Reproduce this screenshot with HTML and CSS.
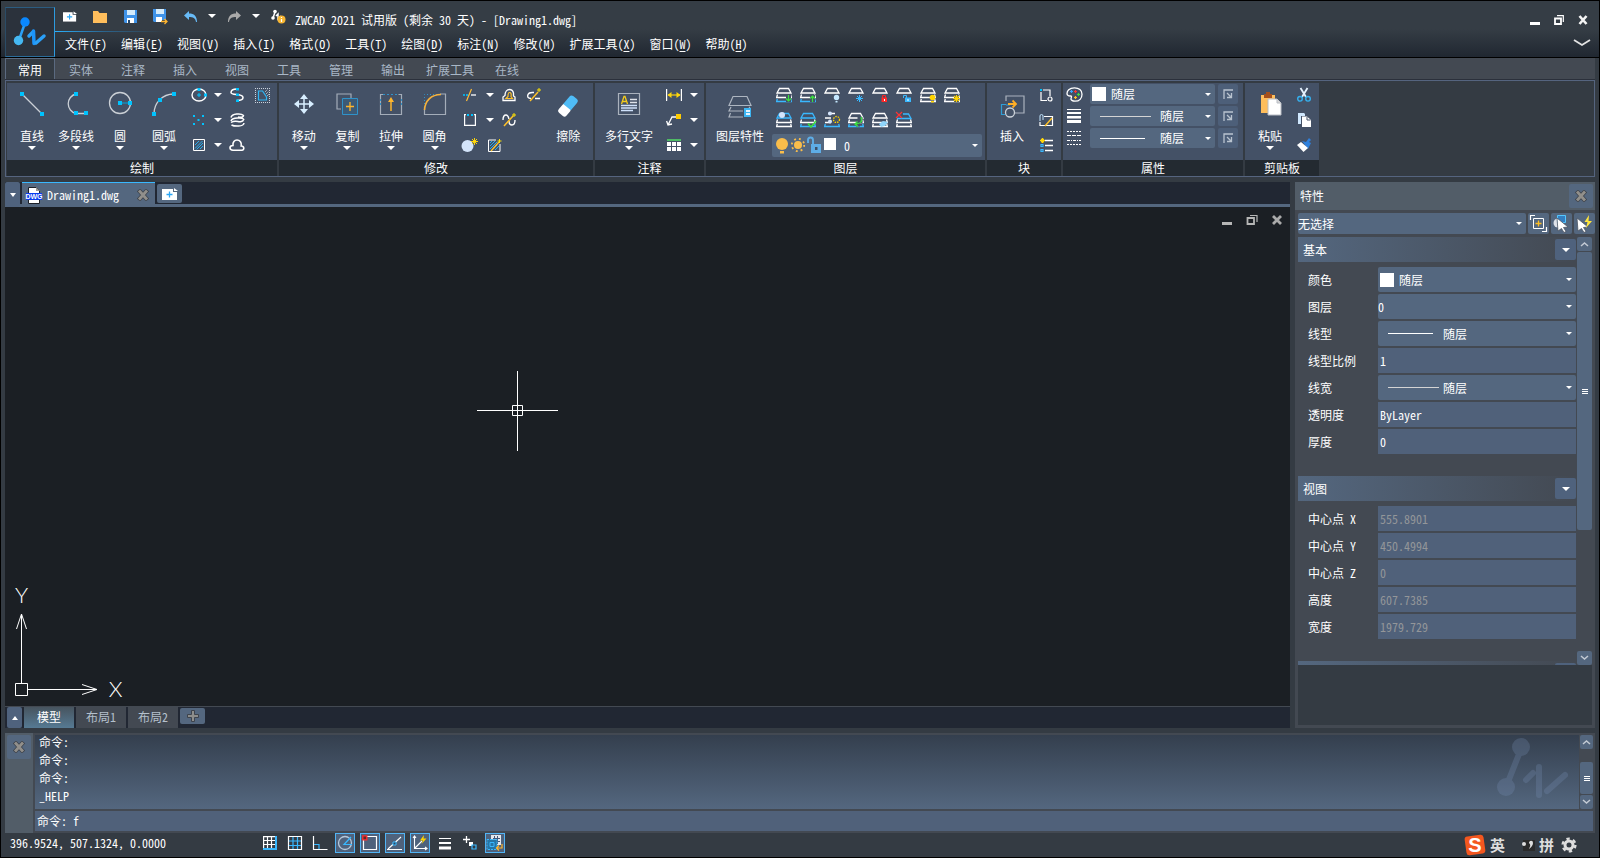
FILE: index.html
```html
<!DOCTYPE html>
<html lang="zh-CN">
<head>
<meta charset="utf-8">
<title>ZWCAD 2021 试用版 - [Drawing1.dwg]</title>
<link rel="stylesheet" href="styles.css">
</head>
<body>
<svg class="sprite" aria-hidden="true">
  <defs>
    <symbol id="trap" viewBox="0 0 16 16"><path d="M3.500 1.500h9l2.500 4.500H1z" fill="none" stroke="currentColor" stroke-width="1.300"/></symbol>
    <symbol id="mid" viewBox="0 0 16 16"><path d="M1.500 7.500L.6 10.500h14.800L14.500 7.500" fill="none" stroke="currentColor" stroke-width="1.300"/></symbol>
    <symbol id="bot" viewBox="0 0 16 16"><path d="M1.300 12L.6 14.500h14.800L14.700 12" fill="none" stroke="currentColor" stroke-width="1.300"/></symbol>
    <symbol id="up" viewBox="0 0 9 6"><path d="M1 5l3.500-3L8 5" fill="none" stroke="#c3cad4" stroke-width="1.500"/></symbol>
    <symbol id="down" viewBox="0 0 9 6"><path d="M1 1l3.500 3L8 1" fill="none" stroke="#c3cad4" stroke-width="1.500"/></symbol>
    <symbol id="cross" viewBox="0 0 12 12"><path d="M1.500 1l9 10M10.500 1l-9 10" stroke="#3d424a" stroke-width="4.400"/><path d="M2 1.500l8 9M10 1.500l-8 9" stroke="#918f8b" stroke-width="2.800"/></symbol>
    <symbol id="launch" viewBox="0 0 10 10"><path d="M1 10V1h9M4 4l4 4M8.500 4v4.500H4" fill="none" stroke="#b9c3cf" stroke-width="1.300"/></symbol>
    <symbol id="newfile" viewBox="0 0 16 12"><path d="M0 1h11v3h4v8H0z" fill="#fff"/><path d="M12 0l4 3h-4z" fill="#fff"/><path d="M7.500 3.500v6M4.500 6.500h6" stroke="#2ba6f5" stroke-width="1.300"/></symbol>
  </defs>
</svg>

<div class="app">
  <header class="top">
    <button class="logo" aria-label="ZWCAD">
      <svg width="50" height="50" viewBox="0 0 50 50"><g stroke-linecap="round" fill="none"><path d="M20 16l-6 17" stroke-width="2.500" stroke="#2aa0f8"/><path d="M24 29l4-4" stroke-width="3.500" stroke="#2aa0f8"/><path d="M28.500 24l.5 12.500" stroke-width="3.500" stroke="#1c94fa"/><path d="M31 36l8-7" stroke-width="3.500" stroke="#2aa0f8"/></g><circle cx="20" cy="15" r="4.700" fill="#0a88ff"/><circle cx="13.500" cy="33.500" r="4.700" fill="#45b8f2"/></svg>
    </button>
    <div class="top-main">
      <div class="quick">
        <button class="q" aria-label="新建"><svg width="14" height="11" viewBox="0 0 16 12"><use href="#newfile"/></svg></button>
        <button class="q" aria-label="打开"><svg width="14" height="13"><path d="M0 1h5l1.500 2H14v10H0z" fill="#ffbe5c"/></svg></button>
        <button class="q" aria-label="保存"><svg width="13" height="13"><path d="M0 0h13v13H1L0 12z" fill="#3f93e8"/><path d="M3 0h8v5H3z" fill="#d4ebfb"/><path d="M3 8h7v5H3z" fill="#fff"/><path d="M4 10h2v3H4z" fill="#25496d"/></svg></button>
        <button class="q" aria-label="另存为"><svg width="15" height="15"><path d="M0 0h13v11H9v2H1L0 12z" fill="#3f93e8"/><path d="M3 0h8v5H3z" fill="#d4ebfb"/><path d="M3 8h6v5H3z" fill="#fff"/><path d="M8 12.500h6M11.500 10l2.500 2.500-2.500 2.500" stroke="#ffb52e" stroke-width="1.300" fill="none"/></svg></button>
        <button class="q" aria-label="撤销"><svg width="13" height="11"><path d="M5 0v2.500c5 0 8 2.500 8 8.500h-1c-.5-4-3-5-7-5v3L0 4.500z" fill="#68bbf7"/></svg></button>
        <button class="qa" aria-label="撤销列表"><i class="tri"></i></button>
        <button class="q" aria-label="重做"><svg width="13" height="11"><path d="M8 0v2.500C3 2.500 0 5 0 11h1c.5-4 3-5 7-5v3l5-4.500z" fill="#a9a9a9"/></svg></button>
        <button class="qa" aria-label="重做列表"><i class="tri"></i></button>
        <span class="q"><svg width="15" height="15"><circle cx="4" cy="2.500" r="1.800" fill="#fff"/><circle cx="2" cy="9" r="1.800" fill="#fff"/><path d="M4 3L2 9M5 7l2-2v5l3-3" stroke="#fff" stroke-width="1.500" fill="none"/><circle cx="10.500" cy="10.500" r="4" fill="#f8b733"/><path d="M10.500 8v1M10.500 10v3" stroke="#fff" stroke-width="1.200"/></svg></span>
        <span class="title">ZWCAD 2021 试用版 (剩余 30 天) - [Drawing1.dwg]</span>
      </div>
      <nav class="menu">
        <button>文件(<u>F</u>)</button><button>编辑(<u>E</u>)</button><button>视图(<u>V</u>)</button><button>插入(<u>I</u>)</button><button>格式(<u>O</u>)</button><button>工具(<u>T</u>)</button><button>绘图(<u>D</u>)</button><button>标注(<u>N</u>)</button><button>修改(<u>M</u>)</button><button>扩展工具(<u>X</u>)</button><button>窗口(<u>W</u>)</button><button>帮助(<u>H</u>)</button>
      </nav>
    </div>
    <div class="win">
      <div class="win-row">
        <button aria-label="最小化"><svg width="10" height="10"><path d="M0 7h10v3H0z" fill="#fff"/></svg></button>
        <button aria-label="还原"><svg width="10" height="10"><path d="M1 3.500h6v5.500H1z" fill="none" stroke="#fff" stroke-width="1.800"/><path d="M3 .7h6.300V7" fill="none" stroke="#fff" stroke-width="1.200"/></svg></button>
        <button aria-label="关闭"><svg width="10" height="10"><path d="M1.500 1l7 8M8.500 1l-7 8" stroke="#f4f4f4" stroke-width="2.600"/></svg></button>
      </div>
      <button class="fold" aria-label="折叠功能区"><svg width="16" height="8"><path d="M0 1l8 5 8-5" fill="none" stroke="#e3e3e3" stroke-width="1.800"/></svg></button>
    </div>
  </header>

  <nav class="tabs">
    <button class="on">常用</button><button>实体</button><button>注释</button><button>插入</button><button>视图</button><button>工具</button><button>管理</button><button>输出</button><button>扩展工具</button><button>在线</button>
  </nav>

  <section class="ribbon">
    <div class="panel p-draw">
      <div class="tools">
        <button class="big"><svg width="28" height="28"><path d="M4 3l21 21" stroke="#cbd0d6" stroke-width="1.300"/><path d="M2 1h4v4H2zM22 21h4v4h-4z" fill="#00c3ff"/></svg>直线<i class="tri"></i></button>
        <button class="big"><svg width="28" height="28"><path d="M14 3a10 10 0 0 0 0 19.500h10" fill="none" stroke="#cbd0d6" stroke-width="1.300"/><path d="M12 1h4v4h-4zM12 20h4v4h-4zM22 20h4v4h-4z" fill="#00c3ff"/></svg>多段线<i class="tri"></i></button>
        <button class="big"><svg width="28" height="28"><circle cx="14" cy="12" r="10.500" fill="none" stroke="#cbd0d6" stroke-width="1.300"/><path d="M14 12h10" stroke="#00a6dd"/><path d="M12 10h4v4h-4zM22 10h4v4h-4z" fill="#00c3ff"/></svg>圆<i class="tri"></i></button>
        <button class="big"><svg width="28" height="28"><path d="M4 23C4 12 12 3 24 3" fill="none" stroke="#cbd0d6" stroke-width="1.300"/><path d="M2 21h4v4H2zM8 7h4v4H8zM22 1h4v4h-4z" fill="#00c3ff"/></svg>圆弧<i class="tri"></i></button>
        <div class="minis">
          <div class="mrow">
            <button class="m26" aria-label="椭圆"><svg width="16" height="14"><ellipse cx="8" cy="7" rx="7" ry="6" fill="none" stroke="#fff" stroke-width="1.400"/><path d="M6.500 0h3v3h-3zM13 5.500h3v3h-3z" fill="#00c3ff"/><path d="M8 5v4M6 7h4" stroke="#00c3ff"/></svg></button><button class="m12" aria-label="椭圆选项"><i class="tri"></i></button>
            <button class="m26" aria-label="样条曲线"><svg width="14" height="14"><path d="M7 1C2 1 1 3 1 4.500 1 8 13 5 13 9.500c0 3-4 3-6 3" fill="none" stroke="#fff" stroke-width="1.500"/><path d="M6 0h3v2.500H6zM6 5.500h3V8H6zM6 11.500h3V14H6z" fill="#00c3ff"/></svg></button>
            <button class="m24" aria-label="边界"><svg width="15" height="15"><path d="M0 .500h15M0 14.500h15M.500 2v12M14.500 2v12" fill="none" stroke="#cbd4df" stroke-dasharray="1 1"/><path d="M10 4l3-3M11 6l3-3M12 8l2-2" stroke="#cbd4df" stroke-dasharray="1 1"/><path d="M3.500 12V3h4l4 6v3z" fill="none" stroke="#2fb6f4" stroke-width="1.200"/></svg></button>
          </div>
          <div class="mrow">
            <button class="m26" aria-label="点"><svg width="12" height="12"><path d="M0 1h2v2H0zM9 1h2v2H9zM4.500 5h2v2h-2zM0 9h2v2H0zM9 9h2v2H9z" fill="#00c3ff"/></svg></button><button class="m12" aria-label="点选项"><i class="tri"></i></button>
            <button class="m26" aria-label="螺旋"><svg width="15" height="14"><path d="M1 4.500C2 .500 11 0 13.500 2.500c0 2-3 2-5.500 1.500M1 8c1-3.500 12-4 13-1M1 9.500c3-2 5-1.500 7-1s5 0 5.500-1.500M1.500 12c3 1.500 12 2 12.500-2" fill="none" stroke="#fff" stroke-width="1.500"/></svg></button>
          </div>
          <div class="mrow">
            <button class="m26" aria-label="图案填充"><svg width="12" height="12"><path d="M.5.500h11v11H.500z" fill="none" stroke="#fff" stroke-width="1"/><path d="M2 6l4-4M2 9.500L9.500 2M3.500 10.500L10 4M7 10l3-3" stroke="#25aef0"/></svg></button><button class="m12" aria-label="填充选项"><i class="tri"></i></button>
            <button class="m26" aria-label="修订云线"><svg width="16" height="12"><path d="M4 11.200h9c2.500 0 2.500-4.200-.8-4.200C13 3 10.500 1 8 1S3.500 3 4 6.500C0 6.500 0 11.200 4 11.200z" fill="none" stroke="#fff" stroke-width="1.600"/></svg></button>
          </div>
        </div>
      </div>
      <h2>绘制</h2>
    </div>

    <div class="panel p-mod">
      <div class="tools">
        <button class="big"><svg width="28" height="28"><path d="M14 5v16M6 13h16" stroke="#d8eeff" stroke-width="1.500"/><path d="M14 3l4 5h-8zM14 23l4-5h-8zM4 13l5-4v8zM24 13l-5-4v8z" fill="#d8eeff"/></svg>移动<i class="tri"></i></button>
        <button class="big"><svg width="28" height="28"><path d="M8 18H4V3h14v4" fill="none" stroke="#a4adb9" stroke-width="1.200"/><path d="M9.500 7.500h15v16h-15z" fill="#3c5a76" stroke="#2f92c9"/><path d="M17 11v9M13 15.500h8" stroke="#ffb62c" stroke-width="1.300"/></svg>复制<i class="tri"></i></button>
        <button class="big"><svg width="28" height="28"><path d="M6.500 3.500h-3v20h21v-20h-3" fill="none" stroke="#a4adb9" stroke-width="1.200"/><path d="M6 3.500h16M3.500 8v6M24.500 8v6" stroke="#2f92c9" stroke-dasharray="2 2"/><path d="M14 20V9" stroke="#ffb62c" stroke-width="1.500"/><path d="M14 6l3 5h-6z" fill="#ffb62c"/></svg>拉伸<i class="tri"></i></button>
        <button class="big"><svg width="28" height="28"><path d="M3.500 16v7.500h21V3H19" fill="none" stroke="#a4adb9" stroke-width="1.200"/><path d="M3.500 16V3.500H18" fill="none" stroke="#2f92c9" stroke-dasharray="1 2"/><path d="M3.500 19C4 10 10 3.500 20 3.500" fill="none" stroke="#f7b23b" stroke-width="1.600"/></svg>圆角<i class="tri"></i></button>
        <div class="minis">
          <div class="mrow">
            <button class="m28" aria-label="修剪"><svg width="14" height="14"><path d="M0 7h5" stroke="#00c3ff" stroke-width="1.300" stroke-dasharray="2 1"/><path d="M8 7h5" stroke="#fff" stroke-width="1.300"/><path d="M3.500 13L8.500 1" stroke="#ffbd39" stroke-width="1.200"/></svg></button><button class="m12" aria-label="修剪选项"><i class="tri"></i></button>
            <button class="m26" aria-label="偏移"><svg width="14" height="14"><path d="M1 12.500V9l2-1.500C3 4 5 1.500 7.500 1.500S11 3 11.500 5v3l1.500 1v3.500z" fill="none" stroke="#fff" stroke-width="1.300"/><path d="M4 10.500l2-2C6 6 6 4.500 7.500 4.500S9.500 6 9 8.500l1.500 2z" fill="none" stroke="#ffc229" stroke-width="1.200"/></svg></button>
            <button class="m24" aria-label="编辑多段线"><svg width="14" height="14"><path d="M4 10.500C1 10.500 0 9 1 6.500 2 4 4 4.500 7 4.500M8 10.500h5" fill="none" stroke="#fff" stroke-width="1.400"/><path d="M3 13l8-9" stroke="#ffc229" stroke-width="1.500"/><path d="M12 0v4M10 2h4" stroke="#ffe400"/></svg></button>
          </div>
          <div class="mrow">
            <button class="m28" aria-label="打断"><svg width="12" height="12"><path d="M2 .600H.600v10.800h10.800V.600H10" fill="none" stroke="#fff" stroke-width="1.200"/><path d="M3 0h2v2H3zM7 0h2v2H7z" fill="#00c3ff"/></svg></button><button class="m12" aria-label="打断选项"><i class="tri"></i></button>
            <button class="m26" aria-label="编辑样条"><svg width="14" height="14"><path d="M1 7C1 4 2 2 4 2s2.500 2 3 4M7 8c0 3 1 4 3 4s3-2 3-5" fill="none" stroke="#fff" stroke-width="1.400"/><path d="M2 13l9-10" stroke="#ffc229" stroke-width="1.500"/><path d="M12 0v4M10 2h4" stroke="#ffe400"/></svg></button>
          </div>
          <div class="mrow">
            <button class="m26" aria-label="分解"><svg width="17" height="14"><circle cx="6.500" cy="8" r="6" fill="#d3e4fb"/><path d="M13.500 0v7M10 3.500h7M11 1l5 5M16 1l-5 5" stroke="#ffd60a"/></svg></button>
            <button class="m24" aria-label="编辑填充"><svg width="13" height="13"><path d="M12 5v7.500H.500V1H8" fill="none" stroke="#fff"/><path d="M2 4l2-2M2 7l5-5M2 10l7-7M4 11l5-5M7 11l4-4" stroke="#25aef0"/><path d="M3 12l8-9" stroke="#ffc229" stroke-width="1.300"/><path d="M11.500 0v4M9.500 2h4" stroke="#ffe400"/></svg></button>
          </div>
        </div>
        <button class="big"><svg width="28" height="28"><g transform="rotate(-50 14 15)"><rect x="3" y="10" width="11" height="10" rx="2.500" fill="#fff"/><path d="M12.500 10H22q3 0 3 3v4q0 3-3 3h-9.500z" fill="#4fbcf7"/></g></svg>擦除</button>
      </div>
      <h2>修改</h2>
    </div>

    <div class="panel p-note">
      <div class="tools">
        <button class="big w62"><svg width="28" height="28"><path d="M3.500 2.500h21v21h-21z" fill="none" stroke="#aab2bd" stroke-width="1.200"/><path d="M6.500 13L9 5.500h1l2.500 7.500M7.500 10.500h4" fill="none" stroke="#f3cb1c" stroke-width="1.300"/><path d="M15 8.500h7M15 11.500h7" stroke="#dfe3ea" stroke-width="1.300"/><path d="M6 14.500h16M6 17h16M6 19.500h12" stroke="#cfe1fb" stroke-width="1.300"/></svg>多行文字<i class="tri"></i></button>
        <div class="minis">
          <div class="mrow"><button class="m28" aria-label="标注"><svg width="16" height="12"><path d="M.600 0v12M15.400 0v12" stroke="#fff" stroke-width="1.200"/><path d="M2 6h12" stroke="#ffd60a" stroke-width="1.200"/><path d="M1.500 6l4-3v6zM14.500 6l-4-3v6z" fill="#ffd60a"/></svg></button><button class="m12" aria-label="标注选项"><i class="tri"></i></button></div>
          <div class="mrow"><button class="m28" aria-label="引线"><svg width="16" height="12"><path d="M2 11l4-8h5M.600 7L2 11l4-1" fill="none" stroke="#fff" stroke-width="1.300"/><path d="M10 0h5v5h-5z" fill="#ffcc00"/></svg></button><button class="m12" aria-label="引线选项"><i class="tri"></i></button></div>
          <div class="mrow"><button class="m28" aria-label="表格"><svg width="14" height="12"><path d="M0 0h14v2H0z" fill="#4fbb65"/><path d="M0 3h4v4H0zM5 3h4v4H5zM10 3h4v4h-4zM0 8h4v4H0zM5 8h4v4H5zM10 8h4v4h-4z" fill="#fff"/></svg></button><button class="m12" aria-label="表格选项"><i class="tri"></i></button></div>
        </div>
      </div>
      <h2>注释</h2>
    </div>

    <div class="panel p-layer">
      <div class="tools">
        <button class="big w62"><svg width="28" height="28"><path d="M7 5.500h14l4 9H3zM5 16l-2 4h14M4.500 22L3 26h14M23 16l1 1" fill="none" stroke="#adb5c0" stroke-width="1.200"/><path d="M18 17h7v9h-7z" fill="#3cb5f2"/><path d="M20 19h4v2h-4zM20 22h4v2h-4z" fill="#e4f4ff"/></svg>图层特性</button>
        <div class="layers">
          <div class="mrow">
            <button class="m24" aria-label="上一图层"><svg class="w" width="16" height="16"><use href="#trap"/><use href="#mid"/><use href="#bot" class="b"/><path class="halo" d="M12.500 7v8"/><path d="M12.500 8v6M10 11.500l2.500 2.500 2.500-2.500" fill="none" stroke="#3be13f" stroke-width="1.200"/></svg></button>
            <button class="m24" aria-label="图层上移"><svg class="w" width="16" height="16"><use href="#trap"/><use href="#mid"/><use href="#bot" class="b"/><path class="halo" d="M12.500 8v7"/><path d="M12.500 15V9M10 11.500L12.500 9l2.500 2.500" fill="none" stroke="#3be13f" stroke-width="1.200"/></svg></button>
            <button class="m24" aria-label="关闭图层"><svg class="w" width="16" height="16"><use href="#trap"/><circle cx="12.500" cy="10.500" r="2.700" fill="#c5e8ff"/><path d="M11.500 14h2v1.500h-2z" fill="#c5e8ff"/></svg></button>
            <button class="m24" aria-label="冻结图层"><svg class="w" width="16" height="16"><use href="#trap"/><path d="M11.500 8v7M8 11.500h7M9 9l5 5M14 9l-5 5" stroke="#39b8ff"/></svg></button>
            <button class="m24" aria-label="锁定图层"><svg class="w" width="16" height="16"><use href="#trap"/><path d="M10.500 11V8.500h3V11" fill="none" stroke="#f22"/><path d="M9.500 10.500h5.500V15H9.500z" fill="#ff2828"/><path d="M12 12h1v2h-1z" fill="#fff"/></svg></button>
            <button class="m24" aria-label="解锁图层"><svg class="w" width="16" height="16"><use href="#trap"/><path d="M7.500 11V8.500h3V11" fill="none" stroke="#39b8ff"/><path d="M9 10.500h6V15H9z" fill="#39b8ff"/><path d="M11.500 12h1v2h-1z" fill="#fff"/></svg></button>
            <button class="m24" aria-label="打开所有图层"><svg class="w" width="16" height="16"><use href="#trap"/><use href="#mid"/><use href="#bot"/><circle cx="12.500" cy="10.500" r="2.800" fill="#ffd400"/><path d="M11 14h3v1.500h-3z" fill="#ffd400"/></svg></button>
            <button class="m24" aria-label="解冻所有图层"><svg class="w" width="16" height="16"><use href="#trap"/><use href="#mid"/><use href="#bot"/><path class="halo" d="M12.500 8v7"/><path d="M12.500 8v7M9 11.500h7M10 9l5 5M15 9l-5 5" stroke="#ffd400" stroke-width="1.200"/></svg></button>
          </div>
          <div class="mrow">
            <button class="m24" aria-label="置为当前"><svg class="w" width="16" height="16"><use href="#trap" class="b"/><use href="#mid"/><use href="#bot"/><circle cx="6" cy="3" r="3" fill="#d3e4fb"/></svg></button>
            <button class="m24" aria-label="图层匹配"><svg class="w" width="16" height="16"><use href="#trap" class="b"/><use href="#mid"/><use href="#bot" class="b"/><path d="M8 11.500l3 3.500 5-6" fill="none" stroke="#3be13f" stroke-width="1.500"/></svg></button>
            <button class="m24" aria-label="图层隔离"><svg class="w" width="16" height="16"><path d="M4 1.500h7M1 6h6M1 10.500h6" stroke="#fff" stroke-width="1.300"/><use href="#bot" class="b"/><circle cx="6" cy="1.500" r="2" fill="#d3e4fb"/><circle cx="6" cy="9.500" r="2" fill="#d3e4fb"/><circle cx="12.500" cy="7.500" r="3" fill="#445166" stroke="#ffd400" stroke-width="1.300" stroke-dasharray="1.500 1"/></svg></button>
            <button class="m24" aria-label="取消隔离"><svg class="w" width="16" height="16"><use href="#trap"/><use href="#mid"/><use href="#bot" class="b"/><path class="halo" d="M12 5v6M8 12h4"/><path d="M13 5c2 5-1 7-6 7M9.500 9.500L7 12l3 2.500" fill="none" stroke="#3be13f" stroke-width="1.300"/></svg></button>
            <button class="m24" aria-label="图层合并"><svg class="w" width="16" height="16"><use href="#trap"/><use href="#mid"/><use href="#bot"/><path d="M7 12l4-3 5 1-3 4-4 1z" fill="#8fd4fa"/></svg></button>
            <button class="m24" aria-label="删除图层"><svg class="w" width="16" height="16"><path d="M7 2h5.500l2.500 4.500H1" fill="none" stroke="#39b8ff" stroke-width="1.300"/><use href="#mid"/><use href="#bot"/><path d="M0 0l6 6M6 0L0 6" stroke="#f33" stroke-width="1.200"/></svg></button>
          </div>
          <label class="combo c-layer"><svg width="62" height="20"><circle cx="8" cy="8" r="6" fill="#f9bd4b"/><path d="M6 15h4v2.500H6z" fill="#f9bd4b"/><circle cx="24" cy="9" r="4" fill="#f9bd4b"/><circle cx="24" cy="9" r="6.200" fill="none" stroke="#f9bd4b" stroke-width="1.800" stroke-dasharray="1.900 3"/><path d="M34 7V4q0-2.500 2.500-2.500T39 4v5" fill="none" stroke="#5eade6" stroke-width="1.900"/><path d="M37 8h10v9H37z" fill="#5eade6"/><path d="M41 11h2.500v3H41z" fill="#3d5068"/><path d="M50 2h12v12H50z" fill="#fff"/></svg><select aria-label="图层"><option>0</option></select></label>
        </div>
      </div>
      <h2>图层</h2>
    </div>

    <div class="panel p-block">
      <div class="tools">
        <button class="big"><svg width="28" height="28"><path d="M8 10V5h18v17H16" fill="none" stroke="#aab2bd" stroke-width="1.200"/><path d="M8 13.500H3.500v10H7M8 14h4" fill="none" stroke="#2f9ed6" stroke-width="1.200"/><circle cx="12" cy="21.500" r="4.500" fill="#445166" stroke="#ccd2d9" stroke-width="1.300"/><path d="M10 13h8M14.500 9.500L18 13l-3.500 3.500" fill="none" stroke="#ffae26" stroke-width="1.800"/></svg>插入</button>
        <div class="minis">
          <div class="mrow"><button class="m24" aria-label="创建块"><svg width="13" height="13"><path d="M3 1h7v6M1 3v8.500h6" fill="none" stroke="#fff" stroke-width="1.200"/><circle cx="10" cy="10" r="2" fill="none" stroke="#fff" stroke-width="1.200"/><path d="M0 0h2v2H0z" fill="#00c3ff"/></svg></button></div>
          <div class="mrow"><button class="m24" aria-label="编辑块"><svg width="15" height="13"><path d="M5 2.500h8.500v9H1V8" fill="none" stroke="#fff" stroke-width="1.200"/><path d="M1 7V2q0-1.500 1.500-1.500T4 2v4" fill="none" stroke="#bfe4ff"/><path d="M6 12l7-8" stroke="#ffc229" stroke-width="1.500"/></svg></button></div>
          <div class="mrow"><button class="m24" aria-label="块属性"><svg width="13" height="14"><path d="M5 2.500h8M5 7.500h8M5 12.500h8" stroke="#fff" stroke-width="1.300"/><path d="M0 2.500h5M2.500 0v5M1 1l3 3M4 1L1 4" stroke="#ffd60a" stroke-width="1.200"/><path d="M1 6.500h2v2H1zM1 11.500h2v2H1z" fill="none" stroke="#39b8ff" stroke-width="1.200"/></svg></button></div>
        </div>
      </div>
      <h2>块</h2>
    </div>

    <div class="panel p-prop">
      <div class="tools props">
        <div class="prow"><svg width="17" height="15"><path d="M8.500.800C3 .800 1 4 1 6.500S3 9 4.500 9s1 1 .5 2.500 1.500 2.700 4 2.700c4.500 0 7-3 7-7S13 .800 8.500.800z" fill="none" stroke="#fff" stroke-width="1.300"/><path d="M5.500 3v3M4 4.500h3" stroke="#3ba4ff" stroke-width="1.200"/><path d="M9.500 3v3M8 4.500h3" stroke="#f33" stroke-width="1.200"/><path d="M12.500 6v3M11 7.500h3" stroke="#3be13f" stroke-width="1.200"/><path d="M9.500 9v3M8 10.500h3" stroke="#ffc229" stroke-width="1.200"/></svg><label class="combo"><span class="swatch"></span><select aria-label="颜色"><option>随层</option></select></label><button class="launch" aria-label="颜色设置"><svg width="10" height="10"><use href="#launch"/></svg></button></div>
        <div class="prow"><svg width="14" height="14"><path d="M0 0h14v1H0zM0 3h14v2H0zM0 7h14v2.500H0zM0 11h14v3H0z" fill="#fff"/></svg><label class="combo"><span class="ln l51"></span><select aria-label="线宽"><option>随层</option></select></label><button class="launch" aria-label="线宽设置"><svg width="10" height="10"><use href="#launch"/></svg></button></div>
        <div class="prow"><svg width="14" height="14"><path d="M0 .500h14M0 13.500h14" stroke="#fff" stroke-dasharray="2 1"/><path d="M0 4.500h14" stroke="#fff" stroke-dasharray="4 1"/><path d="M0 9.500h14" stroke="#fff" stroke-dasharray="3 1 1 1"/></svg><label class="combo"><span class="ln l45"></span><select aria-label="线型"><option>随层</option></select></label><button class="launch" aria-label="线型设置"><svg width="10" height="10"><use href="#launch"/></svg></button></div>
      </div>
      <h2>属性</h2>
    </div>

    <div class="panel p-clip">
      <div class="tools">
        <button class="big"><svg width="28" height="28"><path d="M5 4h14v18H5z" fill="#ffbe5c"/><path d="M8 3h2V1h4v2h2v4H8z" fill="#a5501c"/><path d="M12 8h9l4 4v12H12z" fill="#fff" stroke="#b9bdc4"/><path d="M21 8v4h4" fill="#d8d8d8" stroke="#b9bdc4"/></svg>粘贴<i class="tri"></i></button>
        <div class="minis">
          <div class="mrow"><button class="m24" aria-label="剪切"><svg width="14" height="14"><path d="M3.500 0L9 9M10.500 0L5 9" stroke="#e6f3ff" stroke-width="1.800"/><circle cx="3" cy="10.800" r="2.300" fill="none" stroke="#35b0ee" stroke-width="1.400"/><circle cx="11" cy="10.800" r="2.300" fill="none" stroke="#35b0ee" stroke-width="1.400"/></svg></button></div>
          <div class="mrow"><button class="m24" aria-label="复制到剪贴板"><svg width="13" height="14"><path d="M0 0h6l1 1v2H3v8H0z" fill="#cfe7fd"/><path d="M4 3.500h5l4 3.500v7H4z" fill="#fff"/><path d="M9 4v3h3.500" fill="none" stroke="#445166"/></svg></button></div>
          <div class="mrow"><button class="m24" aria-label="特性匹配"><svg width="14" height="14"><path d="M5 3l4 1 3-4 2 2-2 2 2 1-3 6z" fill="#2f80dc"/><path d="M0 7l4-3 7 6-4.500 4z" fill="#fff"/></svg></button></div>
        </div>
      </div>
      <h2>剪贴板</h2>
    </div>
  </section>

  <main class="work">
    <section class="doc">
      <div class="doctabs">
        <button class="drop" aria-label="文档列表"><i class="tri"></i></button>
        <div class="doctab"><svg width="16" height="17"><path d="M2.500.500h8l3 3v13h-11z" fill="#fff" stroke="#1c2028"/><path d="M10 0v4h4z" fill="#9a9a9a"/><path d="M0 6h16v7H0z" fill="#0a3cf0"/><text x="8" y="12" class="dwg">DWG</text></svg><span>Drawing1.dwg</span><button aria-label="关闭文档"><svg width="12" height="12"><use href="#cross"/></svg></button></div>
        <button class="newdoc" aria-label="新建文档"><svg width="16" height="12"><use href="#newfile"/></svg></button>
      </div>
      <div class="canvas">
        <div class="mdi">
          <button aria-label="最小化文档"><svg width="12" height="12"><path d="M1 8h10v3H1z" fill="#b6b6b6"/></svg></button>
          <button aria-label="还原文档"><svg width="12" height="12"><path d="M1.500 4h6.500v6H1.500z" fill="none" stroke="#b6b6b6" stroke-width="1.800"/><path d="M4 1.500h7V8" fill="none" stroke="#b6b6b6" stroke-width="1.200"/></svg></button>
          <button aria-label="关闭绘图"><svg width="12" height="12"><path d="M2 2l8 8M10 2l-8 8" stroke="#aaa" stroke-width="2.800"/></svg></button>
        </div>
        <svg class="cursor" width="81" height="81"><path d="M0 40.500h81M40.500 1v80M35.500 35.500h10v10h-10z" fill="none" stroke="#fff"/></svg>
        <svg class="ucs" width="125" height="120"><g fill="none" stroke="#fff"><path d="M10.500 97.500h12v12h-12zM16.500 97V29M23 103.500h68"/><path d="M16.500 28l-5 15M16.500 28l5 15M92 103.500l-15-5M92 103.500l-15 5"/></g><text x="16.500" y="17">Y</text><text x="110.500" y="111">X</text></svg>
      </div>
      <div class="layouts">
        <button class="drop" aria-label="布局列表"><i class="tri flip"></i></button>
        <button class="lay on">模型</button><button class="lay">布局1</button><button class="lay">布局2</button>
        <button class="addlay" aria-label="新建布局"><svg width="12" height="12"><path d="M4.500.500h3v4h4v3h-4v4h-3v-4h-4v-3h4z" fill="#8d8d8b" stroke="#3d434c"/></svg></button>
      </div>
    </section>

    <aside class="inspector">
      <div class="ins-head"><span>特性</span><button aria-label="关闭特性"><svg width="12" height="12"><use href="#cross"/></svg></button></div>
      <div class="ins-body">
        <div class="ins-pick">
          <label class="combo c-pick"><select aria-label="选择对象"><option>无选择</option></select></label>
          <button aria-label="添加选择"><svg width="17" height="17"><path d="M3.500 3.500h10v10h-10z" fill="none" stroke="#fff"/><path d="M.500 5V.500H5M12 16.500h4.500V12" fill="none" stroke="#fff" stroke-width="1.200"/><path d="M8.500 5.500v6M5.500 8.500h6" stroke="#ffbe20" stroke-width="1.300"/></svg></button>
          <button aria-label="选择对象"><svg width="17" height="17"><circle cx="5" cy="8" r="4.500" fill="#dfe3ea"/><path d="M4.500.500h8v7h-8z" fill="#347fc1" stroke="#55c8ff"/><path d="M4 3l11 9-4.500.500 2.500 4-2 1-2.500-4L5 16z" fill="#fff" stroke="#4d5663" stroke-width=".8"/></svg></button>
          <button aria-label="快速选择"><svg width="17" height="17"><path d="M1 3l11 9-4.500.500 2.500 4-2 1-2.500-4L2 16z" fill="#fff" stroke="#4d5663" stroke-width=".8"/><path d="M13 0L8.500 7h3L10 13l6-7h-3.500z" fill="#ffe53d"/></svg></button>
        </div>
        <div class="ins-scroll">
          <div class="groups">
            <h3><span>基本</span><button aria-label="折叠基本"><i class="tri"></i></button></h3>
            <div class="fields">
              <label for="f1">颜色</label><span class="combo"><span class="swatch"></span><select id="f1"><option>随层</option></select></span>
              <label for="f2">图层</label><span class="combo flush"><select id="f2"><option>0</option></select></span>
              <label for="f3">线型</label><span class="combo"><span class="ln l45"></span><select id="f3"><option>随层</option></select></span>
              <label for="f4">线型比例</label><input id="f4" value="1">
              <label for="f5">线宽</label><span class="combo"><span class="ln l51"></span><select id="f5"><option>随层</option></select></span>
              <label for="f6">透明度</label><input id="f6" value="ByLayer">
              <label for="f7">厚度</label><input id="f7" value="0">
            </div>
            <h3><span>视图</span><button aria-label="折叠视图"><i class="tri"></i></button></h3>
            <div class="fields">
              <label for="v1">中心点 X</label><input id="v1" value="555.8901" disabled>
              <label for="v2">中心点 Y</label><input id="v2" value="450.4994" disabled>
              <label for="v3">中心点 Z</label><input id="v3" value="0" disabled>
              <label for="v4">高度</label><input id="v4" value="607.7385" disabled>
              <label for="v5">宽度</label><input id="v5" value="1979.729" disabled>
            </div>
            <h3><span></span><button aria-label="折叠其他"></button></h3>
          </div>
          <div class="bar"><button aria-label="向上滚动"><svg width="9" height="6"><use href="#up"/></svg></button><div class="thumb tall"><i class="grip"></i></div><button class="end" aria-label="向下滚动"><svg width="9" height="6"><use href="#down"/></svg></button></div>
        </div>
        <div class="hint"></div>
      </div>
    </aside>
  </main>

  <section class="command">
    <div class="cmd-side"><button aria-label="关闭命令行"><svg width="12" height="12"><use href="#cross"/></svg></button></div>
    <div class="cmd-main">
      <div class="cmd-top">
        <div class="history">
          <div class="log"><p>命令:</p><p>命令:</p><p>命令:</p><p>_HELP</p></div>
          <svg class="mark" width="72" height="64"><g stroke="#7c94bb" stroke-linecap="round" fill="none"><path d="M24 11L9 49" stroke-width="6"/><path d="M29 42l7-7" stroke-width="6"/><path d="M42 29v28" stroke-width="6"/><path d="M50 53l18-16" stroke-width="6"/></g><circle cx="24" cy="9" r="9" fill="#7c94bb"/><circle cx="9" cy="49" r="9" fill="#7c94bb"/></svg>
        </div>
        <div class="bar"><button aria-label="向上"><svg width="9" height="6"><use href="#up"/></svg></button><div class="thumb low"><i class="grip"></i></div><button aria-label="向下"><svg width="9" height="6"><use href="#down"/></svg></button></div>
      </div>
      <div class="prompt"><label for="cmd">命令:</label><input id="cmd" value="f"></div>
    </div>
  </section>

  <footer class="status">
    <span class="coord">396.9524, 507.1324, 0.0000</span>
    <div class="toggles">
      <button aria-label="捕捉"><svg width="14" height="14"><path d="M.600 0v12M4.500 0v12M8.500 0v12M0 .600h12M0 4.500h12M0 8.500h12" stroke="#fff" stroke-width="1.200"/><path d="M13 0v14M0 13h14" stroke="#39b8ff" stroke-width="2"/></svg></button>
      <button aria-label="栅格"><svg width="14" height="14"><path d="M.500.500h13v13H.500z" fill="none" stroke="#fff" stroke-width="1.200"/><path d="M5 1v12M9.500 1v12M1 5h12M1 9.500h12" stroke="#39b8ff" stroke-width="1.200"/></svg></button>
      <button aria-label="正交"><svg width="14" height="14"><path d="M.500 0v13.500h14" fill="none" stroke="#fff" stroke-width="1.200"/><path d="M1 8.500h5V13" fill="none" stroke="#39b8ff" stroke-width="1.200"/></svg></button>
      <button class="act" aria-label="极轴"><svg width="16" height="16"><circle cx="8" cy="8" r="6.500" fill="none" stroke="#b6c8da" stroke-width="1.300"/><path d="M14 2L7 9.500h8" fill="none" stroke="#39b8ff" stroke-width="1.200"/></svg></button>
      <button class="act" aria-label="对象捕捉"><svg width="16" height="16"><path d="M3 1.500h11.500v13H1.500V4" fill="none" stroke="#fff" stroke-width="1.200"/><path d="M.800.800h4v4h-4z" fill="#56302f" stroke="#ff2c2c" stroke-width="1.300"/></svg></button>
      <button class="act" aria-label="对象追踪"><svg width="16" height="16"><path d="M1 14L14 2M0 14.500h15" stroke="#fff" stroke-width="1.100"/><path d="M6 7h3v3H6z" fill="#33475f" stroke="#39b8ff"/></svg></button>
      <button class="act" aria-label="动态UCS"><svg width="16" height="16"><path d="M2.500 1v12.500H15M2.500 13.500L10 6M1 3l1.500-2L4 3M13 12l2 1.500-2 1.500" fill="none" stroke="#fff" stroke-width="1.100"/><path d="M12 0L8 5.500h3L9.500 9l5-5.500h-3z" fill="#ffd400"/></svg></button>
      <button aria-label="线宽显示"><svg width="14" height="14"><path d="M1 2.500h12" stroke="#fff"/><path d="M1 7h12" stroke="#fff" stroke-width="2"/><path d="M1 12h12" stroke="#fff" stroke-width="3"/></svg></button>
      <button aria-label="动态输入"><svg width="14" height="14"><path d="M3.500 0v7M0 3.500h7" stroke="#fff" stroke-width="1.300"/><path d="M6 6h4v4H6z" fill="#fff"/><path d="M9 9h4v4H9z" fill="#343b43" stroke="#39b8ff" stroke-width="1.200"/></svg></button>
      <button class="act" aria-label="选择循环"><svg width="18" height="16"><path d="M5 0h10v10H5z" fill="#e4e8ee"/><path d="M7 3.500h7M7 6.500h7M8.500 1v8M11.500 1v8" stroke="#43597a"/><path d="M1 4.500h10v10H1z" fill="#2675a5" stroke="#39b8ff" stroke-dasharray="2 1"/><path d="M4 7.500h4v4H4z" fill="none" stroke="#39b8ff"/><path d="M16 9v4h-5M13 10.500l-2.500 2.500 2.500 2.500" fill="none" stroke="#ffb52e" stroke-width="1.200"/></svg></button>
    </div>
    <div class="ime">
      <svg width="22" height="22"><rect x="1.500" y="1.500" width="19" height="19" rx="3" fill="#f4571f" transform="rotate(-8 11 11)"/><text x="11" y="18" class="sogou">S</text></svg>
      <button>英</button>
      <span class="ime-mark"><svg width="13" height="10"><circle cx="2" cy="4" r="2" fill="#dedede"/><path d="M8 1q3-1 3 2t-4 6q2-3 1-5-2-1 0-3z" fill="#dedede"/></svg></span>
      <button class="pin">拼</button>
      <button aria-label="输入法设置"><svg width="16" height="16"><circle cx="8" cy="8" r="4" fill="none" stroke="#dedede" stroke-width="3"/><circle cx="8" cy="8" r="6.400" fill="none" stroke="#dedede" stroke-width="2.400" stroke-dasharray="3.350 3.350"/></svg></button>
    </div>
  </footer>
</div>
</body>
</html>
```
FILE: styles.css
```css
* { box-sizing: border-box; }
body { margin: 0; }
body, button, input, select {
  font-family: "Noto Sans Mono CJK SC", "Noto Sans CJK SC", monospace;
  font-size: 12px;
  line-height: 16px;
  color: #fff;
}
button { background: none; border: 0; padding: 0; display: flex; align-items: center; justify-content: center; }
svg { display: block; flex: none; overflow: visible; }
h2, h3, p { margin: 0; font-size: 12px; font-weight: 400; }
.sprite { position: absolute; width: 0; height: 0; }
.app {
  height: 100vh;
  display: flex;
  flex-direction: column;
  background: #343b43;
  border: 1px solid #000;
  overflow: hidden;
}
.tri { width: 0; height: 0; border: 3px solid transparent; border-top: 4px solid #fff; border-bottom: 0; flex: none; }
.tri.flip { border-top: 0; border-bottom: 4px solid #fff; }

.top { display: flex; height: 57px; flex: none; padding: 0 4px; border-bottom: 1px solid #000; background: linear-gradient(#353d45 50%, #202731); }
.logo { width: 50px; height: 50px; margin-top: 6px; background: #2b323c; border: 1px solid #2b6d9b; border-color: #2b5c80 #2d9be0 #2b6d9b #2b4c66; }
.top-main { flex: 1; display: flex; flex-direction: column; }
.quick { height: 31px; display: flex; align-items: center; border-bottom: 1px solid; border-image: linear-gradient(90deg, #2ab2ff, #2b648d 50px, transparent 110px) 1; }
.q { width: 30px; display: flex; justify-content: center; }
.qa { width: 14px; height: 20px; }
.quick .tri, .mrow .tri { border-width: 4px 4px 0; }
.title { padding: 8px 0 0 2px; white-space: pre; }
.menu { flex: 1; display: flex; gap: 14px; padding: 0 0 2px 10px; align-items: center; }
.menu u { text-underline-offset: 2px; }
.win { display: flex; flex-direction: column; align-items: flex-end; padding: 10px 7px 0 0; gap: 10px; }
.win-row { display: flex; gap: 14px; height: 18px; }
.fold { height: 8px; margin-right: -2px; }

.tabs { display: flex; height: 22px; flex: none; margin: 0 4px; background: #434952; border-bottom: 1px solid #2b303b; }
.tabs button { min-width: 52px; padding: 2px 7px 0; color: #a9b7c6; }
.tabs .on { min-width: 50px; color: #fff; background: #343b43; border: 1px solid #5b6a80; border-bottom: 0; }
.ribbon { display: flex; gap: 2px; flex: none; margin: 0 4px; padding: 2px 0 0 1px; border: 1px solid #55647f; }
.panel { background: #445166; display: flex; flex-direction: column; flex: none; }
.panel h2 { height: 16px; background: #232a31; text-align: center; }
.tools { height: 77px; display: flex; padding: 0 1px 0 3px; }
.p-draw { width: 270px; }
.p-mod { width: 314px; }
.p-note { width: 109px; }
.p-layer { width: 279px; }
.p-block { width: 74px; }
.p-prop { width: 180px; }
.p-clip { width: 74px; }
.big { width: 44px; flex-direction: column; justify-content: flex-start; padding-top: 8px; white-space: nowrap; }
.big svg { margin-bottom: 9px; }
.big .tri { margin-top: 2px; border-width: 4px 4px 0; }
.w62 { width: 62px; }
.minis { display: flex; flex-direction: column; }
.mrow { display: flex; height: 25px; padding-bottom: 1px; }
.m28 { width: 28px; }
.m26 { width: 26px; }
.m24 { width: 24px; }
.m12 { width: 12px; }
.w { color: #fff; }
.b { color: #39b8ff; }
.halo { stroke: #445166; stroke-width: 5px; }
.p-mod .big:last-child { margin: 0 2px 0 auto; }
.layers { flex: 1; margin-left: 1px; }

.combo { display: flex; align-items: center; background: #54677f; border-radius: 2px; padding: 0 4px 0 2px; }
.combo::after { content: ""; border: 3px solid transparent; border-top: 3px solid #fff; border-bottom: 0; }
.combo select { flex: 1; min-width: 0; appearance: none; background: none; border: 0; padding: 0; margin-left: 5px; }
.combo option { background: #54677f; }
.c-layer { height: 23px; margin: 1px 2px 0 0; }
.c-layer select { margin-left: 8px; }
.swatch { width: 14px; height: 14px; background: #fff; }
.ln { height: 1px; background: #fff; margin: 0 4px 0 8px; }
.l45 { width: 45px; margin-right: 10px; }
.l51 { width: 51px; background: #d4d4d4; }
.ln + select { margin-left: 0; }
.props { flex-direction: column; gap: 2px; padding: 1px 5px 0 3px; }
.prow { display: grid; grid-template-columns: 16px 1fr 20px; gap: 0 3px; height: 20px; align-items: center; }
.prow > svg { justify-self: center; }
.prow .combo { height: 20px; margin-left: 5px; }
.prow .ln + select { margin-left: 5px; }
.launch { height: 20px; background: #4d5f79; border-radius: 2px; }

.work { flex: 1; min-height: 0; display: grid; grid-template-columns: minmax(0, 1fr) 300px; gap: 5px; padding: 5px 4px; }
.doc { display: flex; flex-direction: column; min-height: 0; }
.doctabs { display: flex; height: 25px; background: #212733; border-bottom: 3px solid #54677f; gap: 2px; }
.drop { width: 15px; height: 25px; background: #4f627d; border-radius: 2px; }
.doctab { width: 133px; height: 25px; display: flex; align-items: center; padding: 0 6px 0 4px; background: #54677f; border-top: 1px solid #39b8ff; }
.doctab span { flex: 1; margin-left: 5px; }
.dwg { font: bold 7px "Liberation Sans", sans-serif; fill: #fff; text-anchor: middle; }
.newdoc { width: 25px; height: 19px; margin-top: 2px; background: #54677f; border-radius: 2px; }
.canvas { flex: 1; position: relative; background: #1b1f24; }
.mdi { display: flex; justify-content: flex-end; gap: 13px; padding: 7px; }
.cursor { position: absolute; left: 472px; top: 163px; }
.ucs { position: absolute; left: 0; bottom: 0; }
.ucs text { font: 300 22px Lato, sans-serif; fill: #fff; text-anchor: middle; }
.layouts { display: flex; height: 22px; background: #212733; border-top: 1px solid #434952; padding-left: 2px; gap: 2px; }
.layouts .drop { height: 21px; }
.lay { width: 50px; padding-bottom: 1px; background: #434952; color: #b4c0cc; }
.lay.on { background: linear-gradient(#47545f, #567a93); color: #fff; }
.addlay { width: 25px; height: 16px; margin-top: 1px; background: #54677f; border-radius: 2px; }

.inspector { display: flex; flex-direction: column; min-height: 0; background: #434952; }
.ins-head { display: flex; height: 28px; flex: none; align-items: center; justify-content: space-between; padding: 0 2px 0 5px; background: #525d68; }
.ins-head button { width: 24px; height: 24px; background: #54677f; border-radius: 2px; }
.ins-body { flex: 1; display: flex; flex-direction: column; min-height: 0; padding: 3px; }
.ins-pick { display: flex; gap: 2px; height: 21px; flex: none; margin-right: -3px; }
.ins-pick button { width: 21px; background: #54677f; border-radius: 2px; }
.c-pick { flex: 1; padding-left: 0; }
.c-pick select, .flush select { margin-left: 0; }
.ins-scroll { flex: 0 1 431px; min-height: 0; display: flex; gap: 1px; padding-top: 3px; }
.groups { flex: 1; overflow: hidden; }
.groups h3 { display: flex; height: 25px; align-items: center; padding-left: 5px; background: linear-gradient(90deg, #54677f, #434952); }
.groups h3 span { flex: 1; }
.groups h3 button { width: 21px; height: 21px; background: #4f627d; border-radius: 2px; }
.groups .tri { border-width: 4px 4px 0; }
.fields { display: grid; grid-template-columns: 70px 1fr; grid-auto-rows: 25px; gap: 2px 0; align-items: center; padding: 5px 0 22px 10px; }
.fields input { height: 25px; min-width: 0; border: 0; padding: 0 2px; background: #50617a; }
.fields input:disabled { color: #939699; }
.fields .combo { height: 25px; }
.fields .flush { padding-left: 0; }
.bar { width: 15px; flex: none; display: flex; flex-direction: column; gap: 1px; }
.bar button { height: 14px; background: #54677f; border-radius: 2px; }
.bar .end { margin-top: auto; }
.thumb { display: flex; align-items: center; justify-content: center; background: #54677f; border-radius: 2px; }
.tall { height: 65%; }
.grip { width: 6px; height: 5px; border: solid #fff; border-width: 1px 0; background: linear-gradient(#fff, #fff) center / 6px 1px no-repeat; }
.hint { flex: 1; background: #343b43; }

.command { display: flex; height: 100px; flex: none; margin: 0 4px; background: #434952; }
.cmd-side { width: 28px; background: #525d68; padding: 2px; }
.cmd-side button { width: 24px; height: 24px; background: #54677f; border-radius: 2px; }
.cmd-main { flex: 1; display: flex; flex-direction: column; gap: 2px; padding: 2px; }
.cmd-top { flex: 1; display: flex; gap: 1px; }
.history { flex: 1; display: flex; justify-content: space-between; padding: 0 10px 0 4px; background: linear-gradient(#343f4e, #54677f); }
.mark { margin-top: 3px; opacity: .25; }
.log { margin-top: -2px; }
.log p { line-height: 18px; }
.cmd-main .bar { width: 13px; }
.low { height: 32px; margin-top: auto; }
.prompt { display: flex; height: 20px; align-items: center; padding-left: 2px; background: #50617a; }
.prompt input { flex: 1; border: 0; background: none; padding: 0; margin-left: 6px; }

.status { display: flex; height: 24px; flex: none; padding: 0 22px 0 9px; background: #343b43; }
.coord { width: 250px; line-height: 20px; }
.toggles { display: flex; gap: 5px; }
.toggles button { width: 20px; height: 20px; }
.toggles .act { background: #4f627c; outline: 1px solid #51b4f5; outline-offset: -1px; }
.ime { margin-left: auto; display: flex; align-items: center; gap: 4px; }
.ime button { font-size: 15px; font-weight: 700; color: #dedede; }
.ime .pin { margin-right: 3px; }
.ime-mark { width: 26px; height: 11px; display: flex; justify-content: flex-end; align-items: center; background: linear-gradient(90deg, transparent 14px, #2a2a2a 14px); }
.sogou { font: bold 20px "Liberation Sans", sans-serif; fill: #fff; text-anchor: middle; }
```
